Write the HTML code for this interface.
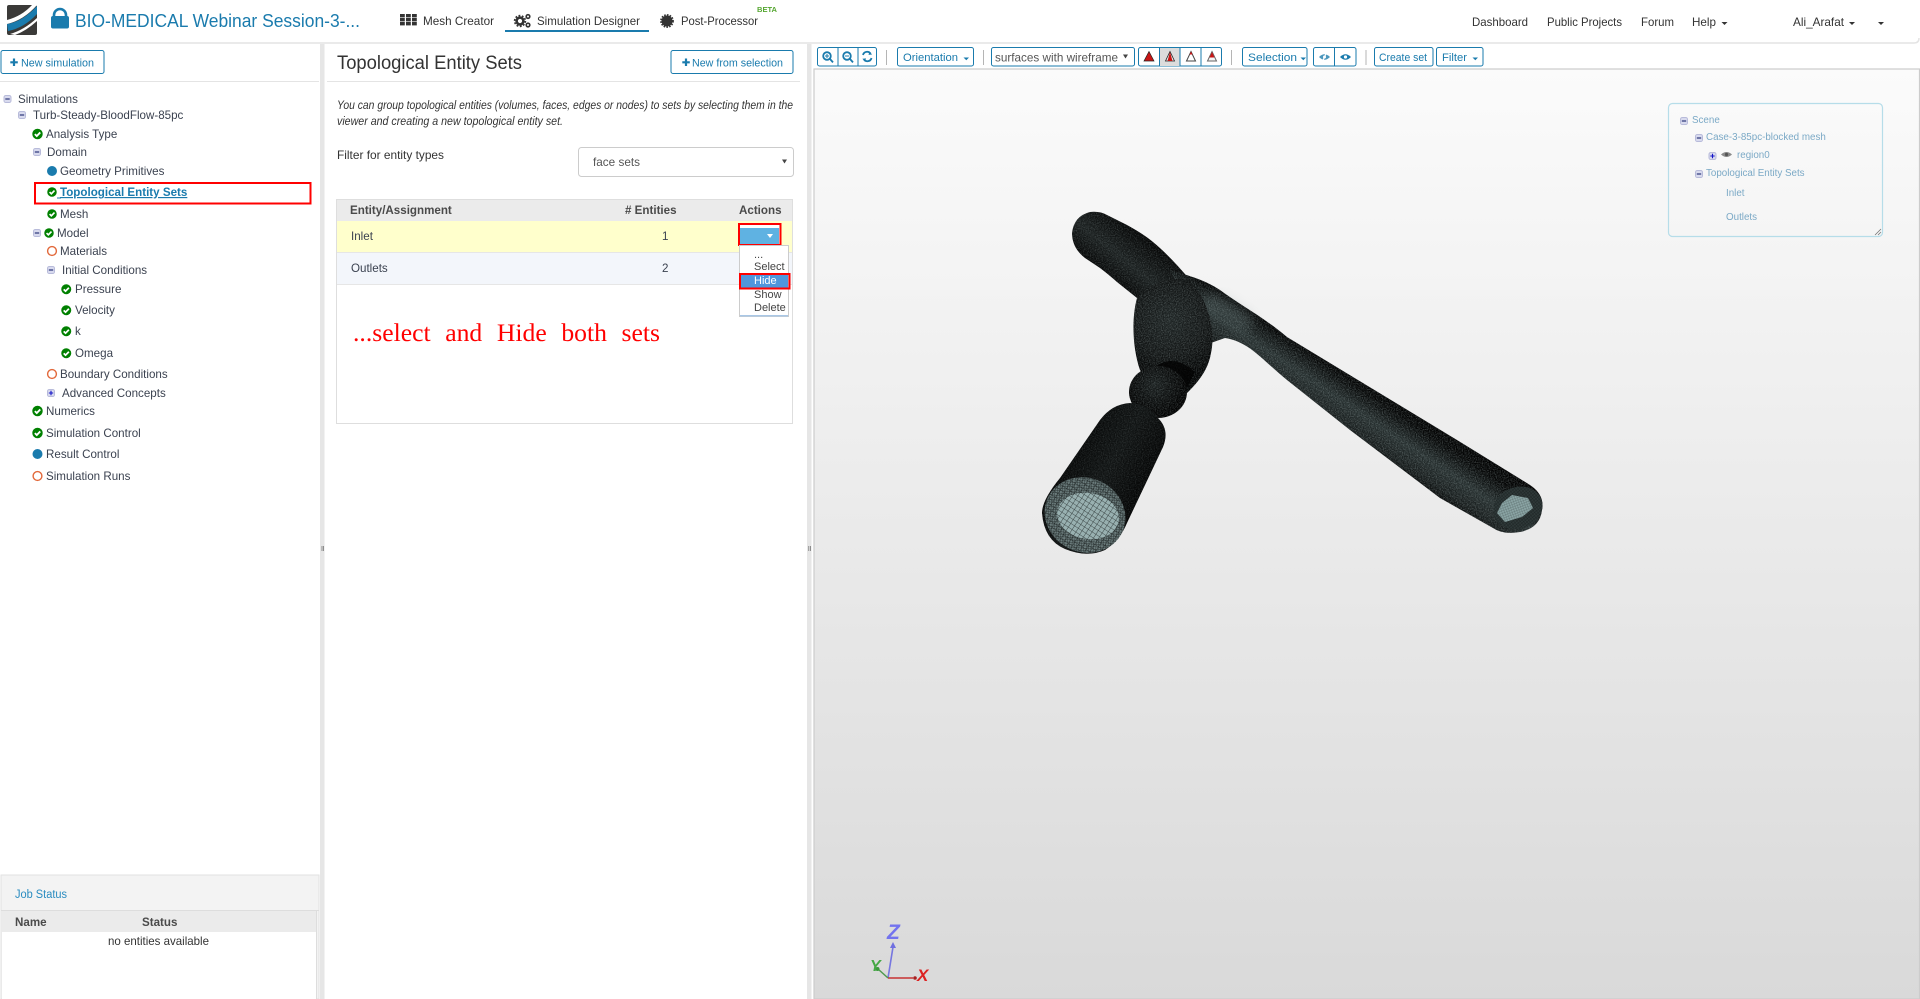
<!DOCTYPE html>
<html lang="en"><head><meta charset="utf-8"><title>Topological Entity Sets</title>
<style>
html,body{margin:0;padding:0;background:#fff;width:1920px;height:999px;overflow:hidden}
svg{display:block;font-family:"Liberation Sans",sans-serif}
.t{font-size:11.6px;fill:#3b4250}
.l{font-size:11.6px;fill:#333}
.b{fill:#1a7bad;font-size:11px}
.h{font-weight:bold;font-size:11.6px;fill:#4a4a4a}
.d{font-size:11px;fill:#444}
.s{font-size:9.8px;fill:#7ba9c6}
.btn{fill:#fff;stroke:#1a7bad;stroke-width:1}
.sep{stroke:#b5b5b5;stroke-width:1}
</style></head><body>
<svg width="1920" height="999" viewBox="0 0 1920 999" xmlns="http://www.w3.org/2000/svg">
<defs>
<linearGradient id="vbg" x1="0" y1="0" x2="0" y2="1"><stop offset="0" stop-color="#fbfbfb"/><stop offset="1" stop-color="#d9d9d9"/></linearGradient>
<linearGradient id="tube" gradientUnits="userSpaceOnUse" x1="1385" y1="388" x2="1350" y2="440"><stop offset="0" stop-color="#000"/><stop offset=".22" stop-color="#040505"/><stop offset=".55" stop-color="#273030"/><stop offset=".85" stop-color="#171c1c"/><stop offset="1" stop-color="#040505"/></linearGradient>
<linearGradient id="stub" gradientUnits="userSpaceOnUse" x1="1150" y1="235" x2="1110" y2="285"><stop offset="0" stop-color="#010101"/><stop offset=".55" stop-color="#1b2020"/><stop offset="1" stop-color="#010101"/></linearGradient>
<linearGradient id="cyl" gradientUnits="userSpaceOnUse" x1="1060" y1="450" x2="1150" y2="500"><stop offset="0" stop-color="#030404"/><stop offset=".5" stop-color="#111414"/><stop offset="1" stop-color="#010101"/></linearGradient>
<radialGradient id="bulb" gradientUnits="userSpaceOnUse" cx="1170" cy="320" r="60"><stop offset="0" stop-color="#1e2424"/><stop offset=".6" stop-color="#121515"/><stop offset="1" stop-color="#020303"/></radialGradient>
<radialGradient id="sph" gradientUnits="userSpaceOnUse" cx="1155" cy="385" r="30"><stop offset="0" stop-color="#1a1f1f"/><stop offset="1" stop-color="#020202"/></radialGradient>
<filter id="n" x="0" y="0" width="1" height="1"><feTurbulence type="fractalNoise" baseFrequency="0.85" numOctaves="2" seed="4"/><feColorMatrix type="matrix" values="0 0 0 0 .5  0 0 0 0 .6  0 0 0 0 .6  1.8 0 0 0 -0.7"/><feComposite in2="SourceAlpha" operator="in"/></filter>
<filter id="bl" x="-50%" y="-50%" width="200%" height="200%"><feGaussianBlur stdDeviation="6"/></filter>
<pattern id="mesh" width="4.5" height="4.5" patternUnits="userSpaceOnUse" patternTransform="rotate(8)"><path d="M0 0H4.5M0 0V4.5" stroke="#1a2020" stroke-width=".8"/></pattern>
<pattern id="meshf" width="2.4" height="2.4" patternUnits="userSpaceOnUse" patternTransform="rotate(-20)"><path d="M0 0H2.4M0 0V2.4" stroke="#0c1010" stroke-width=".7"/></pattern>
<path id="pStub" d="M1072 233Q1074 216 1090 212Q1100 211 1107 215L1127 225Q1145 235 1153 242Q1170 256 1190 280L1165 310L1137 298L1117 282Q1108 274 1100 268L1085 258Q1072 248 1072 233Z"/>
<path id="pTube" d="M1170 270C1190 276 1205 280 1220 290C1240 305 1262 316 1287 337L1457 440L1530 485Q1545 495 1542 510Q1540 528 1520 532Q1503 535 1493 528L1440 498L1350 430L1287 380C1262 360 1250 342 1225 338L1205 345Z"/>
<path id="pBulb" d="M1137 298C1150 283 1170 276 1190 280C1208 300 1216 330 1211 353C1208 372 1195 385 1187 393L1160 400L1140 370C1133 350 1131 320 1137 298Z"/>
<path id="pCyl" d="M1130 403Q1112 404 1100 420L1060 478Q1042 500 1042 513Q1044 540 1065 549Q1087 558 1105 550Q1120 540 1127 523L1163 447Q1170 430 1158 418Q1148 404 1130 403Z"/>
<symbol id="ok" viewBox="0 0 12 12" overflow="visible"><circle cx="6" cy="6" r="5.7" fill="#008000"/><path d="M3.1 6.1L5.2 8.2L9 4.3" fill="none" stroke="#fff" stroke-width="2"/></symbol>
<symbol id="min" viewBox="0 0 8 8"><rect x=".5" y=".5" width="7" height="7" rx="1.8" fill="#d8daee" stroke="#b8bbda"/><path d="M1.8 4H6.2" stroke="#2a3578" stroke-width="1.2"/></symbol>
<symbol id="plu" viewBox="0 0 8 8"><rect x=".5" y=".5" width="7" height="7" rx="1.8" fill="#d8daee" stroke="#b8bbda"/><path d="M1.8 4H6.200M4 1.800V6.200" stroke="#1414c8" stroke-width="1.100"/></symbol>
</defs>
<rect width="1920" height="999" fill="#fff"/>

<!-- Header -->
<path d="M0 43H1914Q1919 43 1919 38" fill="none" stroke="#e4e4e4" stroke-width="1.5"/>
<rect x="7" y="5" width="30" height="30" rx="2" fill="#3b3a38"/>
<path d="M7 24Q22 22 37 6V14Q24 28 8 31Z" fill="#1a7bad"/>
<path d="M7 20Q22 16 32 5H37Q24 20 7 24Z" fill="#fff"/>
<path d="M10 34Q24 30 37 18V21Q26 31 15 35Z" fill="#fff"/>
<path d="M54 17V15A6 6 0 0 1 66 15V17" fill="none" stroke="#1a7bad" stroke-width="2.6"/>
<rect x="51" y="16" width="18" height="12.5" rx="2" fill="#1a7bad"/>
<text x="75" y="27" font-size="18" fill="#1a7bad" textLength="285" lengthAdjust="spacingAndGlyphs">BIO-MEDICAL Webinar Session-3-...</text>

<g fill="#333"><rect x="400" y="14" width="4.8" height="3.4"/><rect x="406" y="14" width="4.8" height="3.4"/><rect x="412" y="14" width="4.800" height="3.4"/><rect x="400" y="18" width="4.8" height="3.4"/><rect x="406" y="18" width="4.8" height="3.4"/><rect x="412" y="18" width="4.8" height="3.4"/><rect x="400" y="22" width="4.8" height="3.4"/><rect x="406" y="22" width="4.8" height="3.4"/><rect x="412" y="22" width="4.8" height="3.4"/></g>
<text x="423" y="25" class="l" textLength="71" lengthAdjust="spacingAndGlyphs">Mesh Creator</text>
<circle cx="520" cy="21" r="3.4" fill="none" stroke="#333" stroke-width="2.6"/><circle cx="520" cy="21" r="5.4" fill="none" stroke="#333" stroke-width="1.6" stroke-dasharray="1.8 1.6"/>
<circle cx="528" cy="16.5" r="1.8" fill="none" stroke="#333" stroke-width="1.6"/><circle cx="528" cy="25" r="1.8" fill="none" stroke="#333" stroke-width="1.6"/>
<text x="537" y="25" class="l" textLength="103" lengthAdjust="spacingAndGlyphs">Simulation Designer</text>
<rect x="505" y="30" width="144" height="2" fill="#1a7bad"/>
<circle cx="667" cy="21" r="5.5" fill="#333"/><circle cx="667" cy="21" r="6" fill="none" stroke="#333" stroke-width="1.8" stroke-dasharray="1.6 1.2"/>
<text x="681" y="25" class="l" textLength="77" lengthAdjust="spacingAndGlyphs">Post-Processor</text>
<text x="757" y="12" font-size="7.5" font-weight="bold" fill="#55a630" textLength="20" lengthAdjust="spacingAndGlyphs">BETA</text>

<text x="1472" y="26" class="l" textLength="56" lengthAdjust="spacingAndGlyphs">Dashboard</text>
<text x="1547" y="26" class="l" textLength="75" lengthAdjust="spacingAndGlyphs">Public Projects</text>
<text x="1641" y="26" class="l" textLength="33" lengthAdjust="spacingAndGlyphs">Forum</text>
<text x="1692" y="26" class="l" textLength="24" lengthAdjust="spacingAndGlyphs">Help</text>
<path d="M1721.5 22h6l-3 3z" fill="#333"/>
<text x="1793" y="26" class="l" textLength="51" lengthAdjust="spacingAndGlyphs">Ali_Arafat</text>
<path d="M1849 22h6l-3 3z" fill="#333"/><path d="M1878 22h6l-3 3z" fill="#333"/>

<!-- Splitters -->
<rect x="320" y="44" width="4.5" height="955" fill="#e6e6e6"/>
<rect x="807" y="44" width="4.5" height="955" fill="#e6e6e6"/>
<path d="M322 546v5M323.6 546v5" stroke="#777" stroke-width=".8"/>
<path d="M808.8 546v5M810.4 546v5" stroke="#777" stroke-width=".8"/>

<!-- Left panel -->
<rect x="1" y="50.5" width="103" height="23" rx="2" class="btn"/>
<path d="M14 58.5V66M10.3 62.3H17.8" stroke="#1a7bad" stroke-width="2.2"/>
<text x="21" y="66.500" class="b" textLength="73" lengthAdjust="spacingAndGlyphs">New simulation</text>
<rect x="0" y="81" width="319" height="1" fill="#e4e4e4"/>

<use href="#min" x="3.5" y="95" width="8" height="8"/><text x="18" y="103" class="t">Simulations</text>
<use href="#min" x="18" y="111" width="8" height="8"/><text x="33" y="119" class="t">Turb-Steady-BloodFlow-85pc</text>
<use href="#ok" x="32" y="128.5" width="11" height="11"/><text x="46" y="138" class="t">Analysis Type</text>
<use href="#min" x="33" y="148" width="8" height="8"/><text x="47" y="156" class="t">Domain</text>
<circle cx="52" cy="171" r="5" fill="#1a7bad"/><text x="60" y="175" class="t">Geometry Primitives</text>
<rect x="35" y="183" width="275.5" height="20.5" fill="none" stroke="#f00" stroke-width="2"/>
<use href="#ok" x="47" y="187" width="10" height="10"/>
<text x="60" y="196" font-size="11.6" font-weight="bold" fill="#1a7bad" text-decoration="underline">Topological Entity Sets</text>
<rect x="57" y="197.5" width="4" height="1" fill="#1a7bad"/>
<use href="#ok" x="47" y="209" width="10" height="10"/><text x="60" y="218" class="t">Mesh</text>
<use href="#min" x="33" y="229" width="8" height="8"/><use href="#ok" x="44" y="228" width="10" height="10"/><text x="57" y="237" class="t">Model</text>
<circle cx="52" cy="251" r="4.4" fill="none" stroke="#e2683a" stroke-width="1.4"/><text x="60" y="255" class="t">Materials</text>
<use href="#min" x="47" y="266" width="8" height="8"/><text x="62" y="274" class="t">Initial Conditions</text>
<use href="#ok" x="61" y="284" width="10.5" height="10.5"/><text x="75" y="293" class="t">Pressure</text>
<use href="#ok" x="61" y="305" width="10.5" height="10.5"/><text x="75" y="314" class="t">Velocity</text>
<use href="#ok" x="61" y="326" width="10.5" height="10.5"/><text x="75" y="335" class="t">k</text>
<use href="#ok" x="61" y="348" width="10.5" height="10.5"/><text x="75" y="357" class="t">Omega</text>
<circle cx="52" cy="374" r="4.4" fill="none" stroke="#e2683a" stroke-width="1.4"/><text x="60" y="378" class="t">Boundary Conditions</text>
<use href="#plu" x="47" y="389" width="8" height="8"/><text x="62" y="397" class="t">Advanced Concepts</text>
<use href="#ok" x="32" y="405.5" width="11" height="11"/><text x="46" y="415" class="t">Numerics</text>
<use href="#ok" x="32" y="427.5" width="11" height="11"/><text x="46" y="437" class="t">Simulation Control</text>
<circle cx="37.5" cy="454" r="5" fill="#1a7bad"/><text x="46" y="458" class="t">Result Control</text>
<circle cx="37.5" cy="476" r="4.4" fill="none" stroke="#e2683a" stroke-width="1.4"/><text x="46" y="480" class="t">Simulation Runs</text>

<!-- Job status -->
<rect x="1" y="875" width="318" height="124" fill="#f3f3f3" stroke="#e2e2e2"/>
<rect x="2" y="911" width="314" height="88" fill="#fff"/>
<rect x="2" y="911" width="314" height="21" fill="#ebebeb"/>
<rect x="1" y="910" width="318" height="1" fill="#ddd"/>
<rect x="316" y="911" width="1" height="88" fill="#ddd"/>
<text x="15" y="898" font-size="11.5" fill="#2a8cc0" textLength="52" lengthAdjust="spacingAndGlyphs">Job Status</text>
<text x="15" y="926" class="h">Name</text><text x="142" y="926" class="h">Status</text>
<text x="108" y="945" class="l" textLength="101" lengthAdjust="spacingAndGlyphs">no entities available</text>

<!-- Middle panel -->
<text x="337" y="69" font-size="19" fill="#333" textLength="185" lengthAdjust="spacingAndGlyphs">Topological Entity Sets</text>
<rect x="671" y="50.5" width="122" height="23" rx="2" class="btn"/>
<path d="M686 58.5V66M682.3 62.3H689.8" stroke="#1a7bad" stroke-width="2.2"/>
<text x="692" y="66.500" class="b" textLength="91" lengthAdjust="spacingAndGlyphs">New from selection</text>
<rect x="327" y="81" width="473" height="1" fill="#e4e4e4"/>
<text x="337" y="109" font-size="11.5" font-style="italic" fill="#333" textLength="456" lengthAdjust="spacingAndGlyphs">You can group topological entities (volumes, faces, edges or nodes) to sets by selecting them in the</text>
<text x="337" y="125" font-size="11.5" font-style="italic" fill="#333" textLength="226" lengthAdjust="spacingAndGlyphs">viewer and creating a new topological entity set.</text>
<text x="337" y="159" class="l" textLength="107" lengthAdjust="spacingAndGlyphs">Filter for entity types</text>
<rect x="578.5" y="147.5" width="215" height="29" rx="3" fill="#fff" stroke="#ccc"/>
<text x="593" y="166" class="l" style="fill:#555" textLength="47" lengthAdjust="spacingAndGlyphs">face sets</text>
<path d="M782 159.5h5l-2.5 4z" fill="#444"/>

<!-- Table -->
<rect x="336.5" y="199.5" width="456" height="224" fill="#fff" stroke="#dedede"/>
<rect x="337" y="200" width="455" height="21" fill="#ebebeb"/>
<rect x="337" y="221" width="455" height="31" fill="#ffffcc"/>
<rect x="337" y="252" width="455" height="1" fill="#e6e6e6"/>
<rect x="337" y="253" width="455" height="31" fill="#f3f6fb"/>
<rect x="337" y="284" width="455" height="1" fill="#e6e6e6"/>
<text x="350" y="214" class="h">Entity/Assignment</text>
<text x="625" y="214" class="h"># Entities</text>
<text x="739" y="214" class="h">Actions</text>
<text x="351" y="240" class="t">Inlet</text><text x="662" y="240" class="t">1</text>
<text x="351" y="272" class="t">Outlets</text><text x="662" y="272" class="t">2</text>
<rect x="739.5" y="224" width="41" height="20" fill="#fff"/>
<rect x="740" y="228" width="39" height="16" fill="#5fb2e2"/>
<path d="M767 234h6l-3 4z" fill="#fff"/>
<rect x="739" y="224" width="41.500" height="21" fill="none" stroke="#f00" stroke-width="2"/>
<rect x="739.5" y="245.5" width="49" height="71" fill="#fff" stroke="#ccc"/>
<rect x="740" y="315" width="48" height="1.5" fill="#a9c7e6"/>
<text x="754" y="258" class="d">...</text>
<text x="754" y="270" class="d">Select</text>
<rect x="741" y="274" width="47" height="14" fill="#4f96dc"/>
<text x="754" y="284" class="d" style="fill:#fff">Hide</text>
<rect x="740" y="274" width="49.5" height="14.5" fill="none" stroke="#f00" stroke-width="2"/>
<text x="754" y="298" class="d">Show</text>
<text x="754" y="311" class="d">Delete</text>
<text x="353" y="341" font-family="Liberation Serif,serif" font-size="25" fill="#f00" word-spacing="8" textLength="307" lengthAdjust="spacingAndGlyphs">...select and Hide both sets</text>

<!-- Toolbar -->
<rect x="817.5" y="47.5" width="59" height="18.5" rx="2" class="btn"/><path d="M838 47.5V66M858 47.5V66" stroke="#1a7bad"/>
<g fill="none" stroke="#1a7bad" stroke-width="1.8"><circle cx="827" cy="56" r="3.8"/><path d="M830 59l3 3.4"/><circle cx="847" cy="56" r="3.8"/><path d="M850 59l3 3.4"/><path d="M825 56h4M827 54v4" stroke-width="1"/><path d="M845 56h4" stroke-width="1"/><path d="M863 55a4.2 4.2 0 0 1 7.5-1.5M871.5 58a4.2 4.2 0 0 1-7.5 1.5" stroke-width="1.8"/></g>
<path d="M869.5 51.5l2.6 3-3.6.4zM865 61.8l-2.6-3 3.6-.4z" fill="#1a7bad"/>
<path class="sep" d="M886.5 50V65"/>
<rect x="897.5" y="47.5" width="76" height="18.5" rx="2" class="btn"/>
<text x="903" y="61" class="b" textLength="55" lengthAdjust="spacingAndGlyphs">Orientation</text><path d="M963.5 57.5h5.5l-2.7 2.8z" fill="#1a7bad"/>
<path class="sep" d="M983.5 50V65"/>
<rect x="991.5" y="47.5" width="143" height="18.5" rx="2" class="btn"/>
<text x="995" y="61.500" class="l" style="fill:#555" textLength="123" lengthAdjust="spacingAndGlyphs">surfaces with wireframe</text><path d="M1123 54.5h5l-2.5 4z" fill="#444"/>
<rect x="1138.5" y="47.5" width="83" height="18.5" rx="2" class="btn"/>
<rect x="1159.5" y="48" width="20.5" height="18" fill="#dcdcdc"/>
<path d="M1159.5 47.5V66M1180 47.5V66M1201 47.5V66" stroke="#1a7bad"/>
<path d="M1149 51.500l5 9.500h-10z" fill="#c81414" stroke="#222" stroke-width=".7"/>
<path d="M1170 51.500l4.500 9.500h-9z" fill="#eee" stroke="#222" stroke-width=".8"/><path d="M1170 52l2.500 9h-5z" fill="#c81414"/>
<path d="M1191 51.500l4.500 9.500h-9z" fill="#fff" stroke="#444" stroke-width="1"/><path d="M1191 51.500l1.500 3h-3z" fill="#c81414"/>
<path d="M1212 51.500l4.500 9.500h-9z" fill="#f4f4f4" stroke="#666" stroke-width="1"/><path d="M1212 52l2.500 5.500h-5z" fill="#c81414"/>
<path class="sep" d="M1231.500 50V65"/>
<rect x="1242.500" y="47.5" width="64.500" height="18.5" rx="2" class="btn"/>
<text x="1248" y="61" class="b" textLength="49" lengthAdjust="spacingAndGlyphs">Selection</text><path d="M1300.500 57.5h5.500l-2.700 2.800z" fill="#1a7bad"/>
<rect x="1313.500" y="47.5" width="42.500" height="18.5" rx="2" class="btn"/><path d="M1334.500 47.500V66" stroke="#1a7bad"/>
<path d="M1319 57Q1324.500 51.500 1330 57Q1324.500 62.500 1319 57Z" fill="#4c97bd"/><circle cx="1324.500" cy="57" r="1.500" fill="#fff"/><path d="M1322 62.500l5-11" stroke="#fff" stroke-width="1.200"/>
<path d="M1340 57Q1345.500 51.500 1351 57Q1345.500 62.500 1340 57Z" fill="#1a7bad"/><circle cx="1345.500" cy="57" r="1.600" fill="#fff"/>
<path class="sep" d="M1366 50V65"/>
<rect x="1374.500" y="47.500" width="58.500" height="18.500" rx="2" class="btn"/>
<text x="1379" y="61" class="b" textLength="48" lengthAdjust="spacingAndGlyphs">Create set</text>
<rect x="1436.500" y="47.500" width="46.500" height="18.500" rx="2" class="btn"/>
<text x="1442" y="61" class="b" textLength="25" lengthAdjust="spacingAndGlyphs">Filter</text><path d="M1472.500 57.500h5.500l-2.700 2.800z" fill="#1a7bad"/>

<!-- Viewer -->
<rect x="814" y="69" width="1105.500" height="930" fill="url(#vbg)" stroke="#cccccc" stroke-width="1.200"/>

<!-- Model -->
<use href="#pStub" fill="url(#stub)"/>
<use href="#pStub" fill="#fff" filter="url(#n)" opacity=".3"/>
<use href="#pTube" fill="url(#tube)"/>
<use href="#pTube" fill="#fff" filter="url(#n)" opacity=".42"/>
<path d="M1205 300Q1225 305 1250 325" stroke="#7f9494" stroke-width="16" opacity=".3" fill="none" filter="url(#bl)"/>
<use href="#pBulb" fill="url(#bulb)"/>
<use href="#pBulb" fill="#fff" filter="url(#n)" opacity=".38"/>
<path d="M1150 372Q1170 350 1195 372L1185 392Z" fill="#020303" opacity=".8"/>
<ellipse cx="1158" cy="392" rx="29" ry="26" fill="url(#sph)"/>
<ellipse cx="1158" cy="392" rx="29" ry="26" fill="#fff" filter="url(#n)" opacity=".35"/>
<use href="#pCyl" fill="url(#cyl)"/>
<use href="#pCyl" fill="#fff" filter="url(#n)" opacity=".22"/>
<ellipse cx="1085" cy="515" rx="41" ry="37" transform="rotate(25 1085 515)" fill="#6b7c7c"/>
<ellipse cx="1085" cy="515" rx="41" ry="37" transform="rotate(25 1085 515)" fill="url(#meshf)" opacity=".8"/>
<ellipse cx="1088" cy="516" rx="31" ry="23" transform="rotate(10 1088 516)" fill="#98b0b0"/>
<ellipse cx="1085" cy="515" rx="41" ry="37" transform="rotate(25 1085 515)" fill="url(#mesh)" opacity=".9"/>
<ellipse cx="1518" cy="508" rx="25" ry="21" transform="rotate(-20 1518 508)" fill="#2e3838"/>
<ellipse cx="1518" cy="508" rx="25" ry="21" transform="rotate(-20 1518 508)" fill="url(#meshf)" opacity=".6"/>
<path d="M1512 495L1528 498L1533 508L1522 517L1505 522L1497 513L1502 503Z" fill="#8aa4a4"/>
<path d="M1512 495L1528 498L1533 508L1522 517L1505 522L1497 513L1502 503Z" fill="url(#meshf)" opacity=".35"/>

<!-- Scene panel -->
<rect x="1668.500" y="103.500" width="214" height="133" rx="4" fill="none" stroke="#b6dde9" stroke-width="1.200"/>
<path d="M1875 235l6-6M1878 235l3-3" stroke="#777" stroke-width=".8"/>
<use href="#min" x="1680" y="117" width="8" height="8"/><text x="1692" y="123" class="s">Scene</text>
<use href="#min" x="1695" y="134" width="8" height="8"/><text x="1706" y="140" class="s">Case-3-85pc-blocked mesh</text>
<use href="#plu" x="1708.500" y="152" width="8" height="8"/>
<path d="M1721 154.500Q1726.500 149.500 1732 154.500Q1726.500 159.500 1721 154.500Z" fill="#8a8a8a"/><circle cx="1726.500" cy="154.500" r="1.600" fill="#555"/>
<text x="1737" y="158" class="s">region0</text>
<use href="#min" x="1695" y="170" width="8" height="8"/><text x="1706" y="176" class="s">Topological Entity Sets</text>
<text x="1726" y="196" class="s">Inlet</text>
<text x="1726" y="220" class="s">Outlets</text>

<!-- Axis triad -->
<path d="M888 978L893 947" stroke="#7676e0" stroke-width="1.600"/><path d="M893 942l3 6h-6z" fill="#6f6fe0"/>
<path d="M888 978H913" stroke="#c83232" stroke-width="1.400"/><circle cx="915" cy="978" r="1.800" fill="#a82020"/>
<path d="M888 978L878 969" stroke="#4f9a4f" stroke-width="1.500"/><circle cx="877.500" cy="969" r="2" fill="#3a9a3a"/>
<text x="887" y="939" font-size="21" font-weight="bold" font-style="italic" fill="#7373ee">Z</text>
<text x="917" y="981" font-size="17" font-weight="bold" font-style="italic" fill="#dc2222">X</text>
<text x="870" y="971" font-size="16" font-weight="bold" font-style="italic" fill="#45a845">Y</text>
</svg>
</body></html>
